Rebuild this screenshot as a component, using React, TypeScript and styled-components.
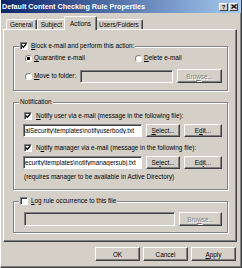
import styled, { createGlobalStyle } from 'styled-components';

const GlobalStyle = createGlobalStyle`
    html, body {
        margin: 0;
        padding: 0;
        background: #d4d0c8;
    }
    body {
        font-family: 'Liberation Sans', Arial, sans-serif;
        font-size: 6.4px;
        color: #000;
    }
    * {
        box-sizing: border-box;
    }
`;

const CheckMark = () => (
    <svg width="6" height="6" viewBox="0 0 6 6">
        <polyline
            points="0.8,2.6 2.3,4.2 5.2,1"
            fill="none"
            stroke="#000"
            strokeWidth="1.3"
        />
    </svg>
);

const CloseGlyph = () => (
    <svg width="6" height="5" viewBox="0 0 6 5">
        <path d="M0.5 0.5 L5.5 4.5 M5.5 0.5 L0.5 4.5" stroke="#000" strokeWidth="1.2" />
    </svg>
);

const App = () => {
    return (
        <>
            <GlobalStyle />
            <Window>
                <TitleBar>
                    <Title>Default Content Checking Rule Properties</Title>
                    <TitleButtons>
                        <TitleButton>?</TitleButton>
                        <TitleButton>
                            <CloseGlyph />
                        </TitleButton>
                    </TitleButtons>
                </TitleBar>
                <Body>
                    <TabRow>
                        <Tab>General</Tab>
                        <Tab>Subject</Tab>
                        <Tab $active>Actions</Tab>
                        <Tab>Users/Folders</Tab>
                    </TabRow>
                    <Panel>
                        <Group>
                            <Legend>
                                <CheckBox>
                                    <CheckMark />
                                </CheckBox>
                                <span>
                                    <U>B</U>lock e-mail and perform this action:
                                </span>
                            </Legend>
                            <GroupBody $indent={6} $top={3} $bottom={7} $gap={6}>
                                <Row>
                                    <Choice $width={106}>
                                        <Radio $checked />
                                        <span>
                                            <U>Q</U>uarantine e-mail
                                        </span>
                                    </Choice>
                                    <Choice>
                                        <Radio />
                                        <span>
                                            <U>D</U>elete e-mail
                                        </span>
                                    </Choice>
                                </Row>
                                <Row>
                                    <Choice>
                                        <Radio />
                                        <span>
                                            <U>M</U>ove to folder:
                                        </span>
                                    </Choice>
                                    <Field $disabled readOnly value="" />
                                    <Button $w={45} disabled>
                                        Bro<U>w</U>se...
                                    </Button>
                                </Row>
                            </GroupBody>
                        </Group>

                        <Group>
                            <Legend>Notification</Legend>
                            <GroupBody $indent={4} $top={5} $bottom={7} $gap={3}>
                                <Row $pad={1}>
                                    <CheckBox>
                                        <CheckMark />
                                    </CheckBox>
                                    <span>
                                        <U>N</U>otify user via e-mail (message in the following file):
                                    </span>
                                </Row>
                                <Row>
                                    <Field readOnly value="alSecurity\templates\notifyuserbody.txt" />
                                    <Button $w={34} $h={13}>
                                        <U>S</U>elect...
                                    </Button>
                                    <Button $w={38} $h={13}>
                                        E<U>d</U>it...
                                    </Button>
                                </Row>
                                <Row $pad={1} $space={3}>
                                    <CheckBox>
                                        <CheckMark />
                                    </CheckBox>
                                    <span>
                                        N<U>o</U>tify manager via e-mail (message in the following file):
                                    </span>
                                </Row>
                                <Row>
                                    <Field readOnly value="ecurity\templates\notifymanagersubj.txt" />
                                    <Button $w={34} $h={13}>
                                        Se<U>l</U>ect...
                                    </Button>
                                    <Button $w={38} $h={13}>
                                        Ed<U>i</U>t...
                                    </Button>
                                </Row>
                                <Row $pad={1}>
                                    <span>(requires manager to be available in Active Directory)</span>
                                </Row>
                            </GroupBody>
                        </Group>

                        <Group>
                            <Legend>
                                <CheckBox />
                                <span>
                                    <U>L</U>og rule occurrence to this file
                                </span>
                            </Legend>
                            <GroupBody $indent={5} $top={7} $bottom={6} $gap={0}>
                                <Row>
                                    <Field $disabled $tall readOnly value="" />
                                    <Button $w={43} disabled>
                                        Bro<U>w</U>se...
                                    </Button>
                                </Row>
                            </GroupBody>
                        </Group>
                    </Panel>
                    <ButtonRow>
                        <Button $w={45}>OK</Button>
                        <Button $w={45}>Cancel</Button>
                        <Button $w={45}>
                            <U>A</U>pply
                        </Button>
                    </ButtonRow>
                </Body>
            </Window>
        </>
    );
};

const Window = styled.div`
    width: 242px;
    height: 268px;
    display: flex;
    flex-direction: column;
    background: #d4d0c8;
    border-left: 1px solid #fff;
    border-right: 1px solid #404040;
    border-bottom: 1px solid #404040;
    box-shadow: inset -1px -1px 0 #808080;
`;

const TitleBar = styled.div`
    height: 13px;
    flex: none;
    display: flex;
    align-items: center;
    justify-content: space-between;
    padding: 0 3px 0 1px;
    background: linear-gradient(to right, #0a246a, #a6caf0);
`;

const Title = styled.span`
    color: #fff;
    font-weight: bold;
    font-size: 7.2px;
    white-space: nowrap;
`;

const TitleButtons = styled.div`
    display: flex;
    gap: 1px;
`;

const TitleButton = styled.div`
    width: 9px;
    height: 8px;
    display: flex;
    align-items: center;
    justify-content: center;
    background: #d4d0c8;
    border: 1px solid;
    border-color: #fff #404040 #404040 #fff;
    font-weight: bold;
    font-size: 6px;
    line-height: 1;
`;

const Body = styled.div`
    display: flex;
    flex-direction: column;
    padding: 4px 4px 0 2px;
`;

const TabRow = styled.div`
    display: flex;
    align-items: flex-end;
    height: 13px;
    padding-left: 3px;
    margin-bottom: -1px;
    position: relative;
    z-index: 1;
`;

const Tab = styled.div<{ $active?: boolean }>`
    height: ${(p) => (p.$active ? 14 : 10)}px;
    margin: 0 ${(p) => (p.$active ? -2 : 0)}px ${(p) => (p.$active ? 0 : 1)}px;
    padding: 0 ${(p) => (p.$active ? 5 : 3)}px;
    display: flex;
    align-items: center;
    background: #d4d0c8;
    border: 1px solid;
    border-bottom: none;
    border-color: #fff #404040 transparent #fff;
    border-radius: 2px 2px 0 0;
    box-shadow: inset -1px 0 0 #808080;
    white-space: nowrap;
    position: relative;
    z-index: ${(p) => (p.$active ? 2 : 0)};
`;

const Panel = styled.div`
    display: flex;
    flex-direction: column;
    gap: 7px;
    padding: 12px 8px 8px 9px;
    border: 1px solid;
    border-color: #fff #404040 #404040 #fff;
    box-shadow: inset -1px -1px 0 #808080;
`;

const Group = styled.fieldset`
    margin: 0;
    padding: 0 5px 0 5px;
    min-width: 0;
    border: 1px solid #808080;
    box-shadow: inset 1px 1px 0 #fff, 1px 1px 0 #fff;
`;

const Legend = styled.legend`
    display: flex;
    align-items: center;
    gap: 3px;
    height: 8px;
    padding: 0 1px;
    line-height: 8px;
    white-space: nowrap;
    background: #d4d0c8;
`;

const GroupBody = styled.div<{ $indent: number; $top: number; $bottom: number; $gap: number }>`
    display: flex;
    flex-direction: column;
    gap: ${(p) => p.$gap}px;
    padding: ${(p) => p.$top}px 0 ${(p) => p.$bottom}px ${(p) => p.$indent}px;
`;

const Row = styled.div<{ $pad?: number; $space?: number }>`
    display: flex;
    align-items: center;
    gap: 4px;
    min-height: 10px;
    line-height: 8px;
    padding-left: ${(p) => p.$pad ?? 0}px;
    margin-top: ${(p) => p.$space ?? 0}px;
    white-space: nowrap;
`;

const Choice = styled.label<{ $width?: number }>`
    display: flex;
    align-items: center;
    gap: 2px;
    width: ${(p) => (p.$width ? `${p.$width}px` : 'auto')};
    flex: none;
`;

const CheckBox = styled.span`
    width: 8px;
    height: 8px;
    flex: none;
    display: inline-flex;
    align-items: center;
    justify-content: center;
    background: #fff;
    border: 1px solid;
    border-color: #808080 #fff #fff #808080;
    box-shadow: inset 1px 1px 0 #404040;
`;

const Radio = styled.span<{ $checked?: boolean }>`
    width: 7px;
    height: 7px;
    flex: none;
    border-radius: 50%;
    border: 1px solid;
    border-color: #808080 #fff #fff #808080;
    background: ${(p) =>
        p.$checked ? 'radial-gradient(circle, #000 0 1.4px, #fff 1.6px)' : '#fff'};
`;

const U = styled.span`
    text-decoration: underline;
`;

const Field = styled.input<{ $disabled?: boolean; $tall?: boolean }>`
    flex: 1;
    min-width: 0;
    height: ${(p) => (p.$tall ? 14 : 13)}px;
    padding: 0 1px;
    font-family: 'Liberation Sans', Arial, sans-serif;
    font-size: 6.4px;
    color: #000;
    background: ${(p) => (p.$disabled ? '#d4d0c8' : '#fff')};
    border: 1px solid;
    border-color: #808080 #fff #fff #808080;
    box-shadow: inset 1px 1px 0 #404040;
    outline: none;
`;

const Button = styled.button<{ $w: number; $h?: number }>`
    width: ${(p) => p.$w}px;
    height: ${(p) => p.$h ?? 14}px;
    flex: none;
    padding: 0;
    font-family: 'Liberation Sans', Arial, sans-serif;
    font-size: 6.4px;
    color: #000;
    background: #d4d0c8;
    border: 1px solid;
    border-color: #fff #404040 #404040 #fff;
    box-shadow: inset -1px -1px 0 #808080;

    &:disabled {
        color: #808080;
        text-shadow: 1px 1px 0 #fff;
    }
`;

const ButtonRow = styled.div`
    display: flex;
    justify-content: flex-end;
    gap: 3px;
    margin-top: 5px;
    padding-right: 1px;
`;

export default App;
